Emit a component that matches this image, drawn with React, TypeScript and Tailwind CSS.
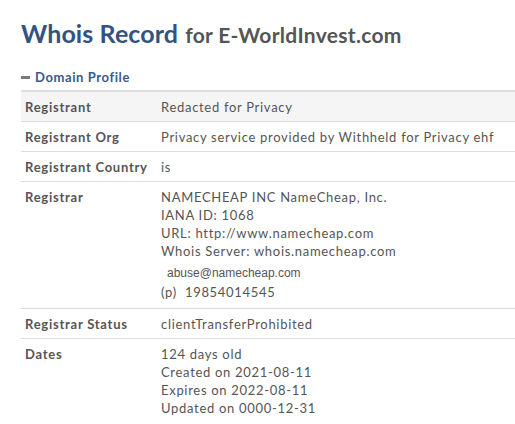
import React from "react";

const rows: { label: string; lines: React.ReactNode[] }[] = [
  { label: "Registrant", lines: ["Redacted for Privacy"] },
  { label: "Registrant Org", lines: ["Privacy service provided by Withheld for Privacy ehf"] },
  { label: "Registrant Country", lines: ["is"] },
  {
    label: "Registrar",
    lines: [
      "NAMECHEAP INC NameCheap, Inc.",
      "IANA ID: 1068",
      "URL: http://www.namecheap.com",
      "Whois Server: whois.namecheap.com",
      <span className="block pl-[6px] pt-[4px] text-[12px] leading-[19px] tracking-normal font-['Liberation_Sans',Arial,sans-serif]">
        abuse@namecheap.com
      </span>,
      <span>
        (p)&nbsp; 19854014545
      </span>,
    ],
  },
  { label: "Registrar Status", lines: ["clientTransferProhibited"] },
  {
    label: "Dates",
    lines: ["124 days old", "Created on 2021-08-11", "Expires on 2022-08-11", "Updated on 0000-12-31"],
  },
];

export default function App() {
  return (
    <div className="min-h-screen bg-white font-['Lato',sans-serif] text-[#555] pl-[21px] pt-[18px]">
      <h1 className="leading-[30px] whitespace-nowrap">
        <span className="text-[25px] font-bold text-[#34527f] tracking-[0.1px]">Whois Record</span>
        <span className="text-[21px] font-bold text-[#555] ml-[7px] tracking-[0.3px]">for E-WorldInvest.com</span>
      </h1>
      <div className="mt-[17px] flex items-center gap-[5px]">
        <span className="block w-[9px] h-[3px] bg-[#7a7a7a]"></span>
        <span className="text-[13px] font-bold text-[#3a5a8a] tracking-[0.6px] leading-[16px]">Domain Profile</span>
      </div>
      <div className="mt-[5px] border-t-2 border-[#ddd]">
        {rows.map((r, i) => (
          <div
            key={r.label}
            className={`flex border-b border-[#ddd] text-[13px] tracking-[0.7px] leading-[18px] ${
              i === 0 ? "bg-[#f5f5f5]" : "bg-white"
            } ${r.lines.length > 1 ? "pt-[6px] pb-[7px]" : "pt-[6px] pb-[5px]"}`}
          >
            <div className="w-[140px] pl-[4px] font-bold shrink-0 tracking-[0.75px]">{r.label}</div>
            <div className="flex flex-col">
              {r.lines.map((l, j) => (
                <div key={j}>{l}</div>
              ))}
            </div>
          </div>
        ))}
      </div>
    </div>
  );
}
